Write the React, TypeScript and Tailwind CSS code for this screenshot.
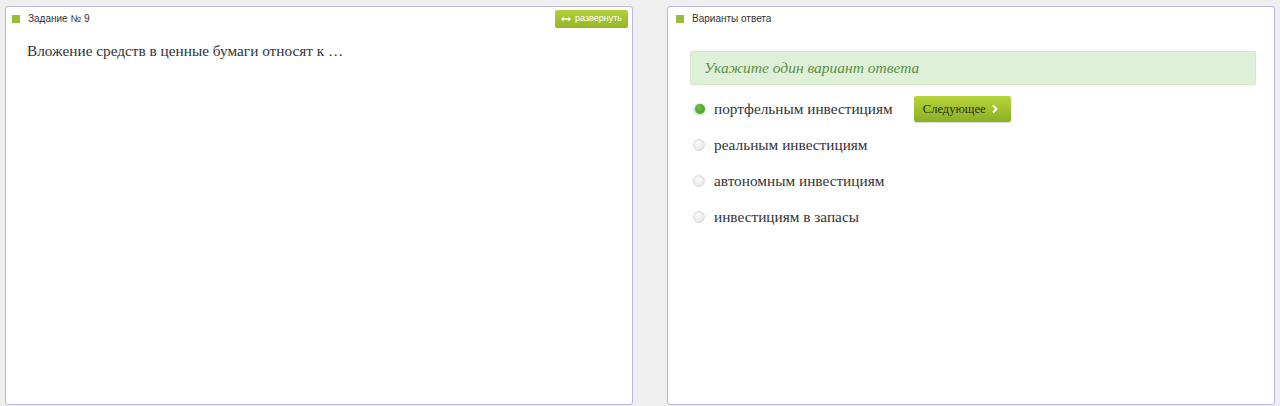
import { ChevronRight } from "lucide-react";

const options = [
  "портфельным инвестициям",
  "реальным инвестициям",
  "автономным инвестициям",
  "инвестициям в запасы",
];

function PanelHeader({ title }: { title: string }) {
  return (
    <div className="flex items-center gap-[8px] font-['Liberation_Sans',Arial,sans-serif] text-[10px] leading-[12px] text-[#333]">
      <span className="size-[8px] bg-[#9cbc3a]" />
      <span>{title}</span>
    </div>
  );
}

function Radio({ checked }: { checked: boolean }) {
  if (checked) {
    return (
      <span className="flex size-[13px] items-center justify-center rounded-full bg-[#d9ecd0]">
        <span className="size-[10px] rounded-full bg-[radial-gradient(circle_at_40%_35%,#6cc04a,#3d9a1f)]" />
      </span>
    );
  }
  return (
    <span className="size-[12px] rounded-full border border-[#dcdcdc] bg-[radial-gradient(circle_at_40%_35%,#fafafa,#e2e2e2)]" />
  );
}

export default function App() {
  return (
    <div className="flex h-[406px] w-[1280px] gap-[34px] bg-[#efefef] px-[5px] pt-[6px]">
      <section className="flex h-[399px] w-[628px] flex-col rounded-[3px] border border-[#b7b7df] bg-white">
        <div className="flex items-start justify-between pl-[6px] pr-[4px] pt-[3px]">
          <div className="pt-[3px]">
            <PanelHeader title="Задание № 9" />
          </div>
          <button
            type="button"
            className="flex h-[18px] items-center gap-[4px] rounded-[2px] bg-gradient-to-b from-[#b3d03a] to-[#93b626] px-[6px] font-['Liberation_Sans',Arial,sans-serif] text-[9px] text-white"
          >
            <svg width="10" height="6" viewBox="0 0 10 6" fill="white">
              <path d="M0 3 L2.5 0.5 V2.2 H7.5 V0.5 L10 3 L7.5 5.5 V3.8 H2.5 V5.5 Z" />
            </svg>
            развернуть
          </button>
        </div>
        <p className="pl-[21px] pt-[12px] font-['Liberation_Serif','Times_New_Roman',serif] text-[15.3px] text-[#333]">
          Вложение средств в ценные бумаги относят к …
        </p>
      </section>

      <section className="flex h-[399px] w-[608px] flex-col rounded-[3px] border border-[#b7b7df] bg-white">
        <div className="pl-[8px] pt-[6px]">
          <PanelHeader title="Варианты ответа" />
        </div>
        <div className="ml-[22px] mr-[18px] mt-[26px] flex h-[34px] items-center rounded-[2px] border border-[#d3e8c6] bg-[#dff0d8] pl-[13px] font-['Liberation_Serif','Times_New_Roman',serif] text-[15.5px] italic text-[#5b8f45]">
          Укажите один вариант ответа
        </div>
        <ul className="ml-[25px] mt-[6px] flex flex-col font-['Liberation_Serif','Times_New_Roman',serif] text-[15.3px] text-[#333]">
          {options.map((o, i) => (
            <li key={o} className="flex h-[36px] items-center">
              <span className="flex w-[21px] items-center">
                <Radio checked={i === 0} />
              </span>
              <span>{o}</span>
              {i === 0 && (
                <button
                  type="button"
                  className="ml-[21px] flex h-[26px] w-[97px] items-center justify-center gap-[4px] rounded-[2px] bg-gradient-to-b from-[#b7d43a] to-[#8cb022] font-['Liberation_Serif','Times_New_Roman',serif] text-[12.5px] text-[#2a2a2a] shadow-[0_1px_1px_rgba(0,0,0,0.15)]"
                >
                  Следующее
                  <ChevronRight className="size-[12px] text-white" strokeWidth={4} />
                </button>
              )}
            </li>
          ))}
        </ul>
      </section>
    </div>
  );
}
